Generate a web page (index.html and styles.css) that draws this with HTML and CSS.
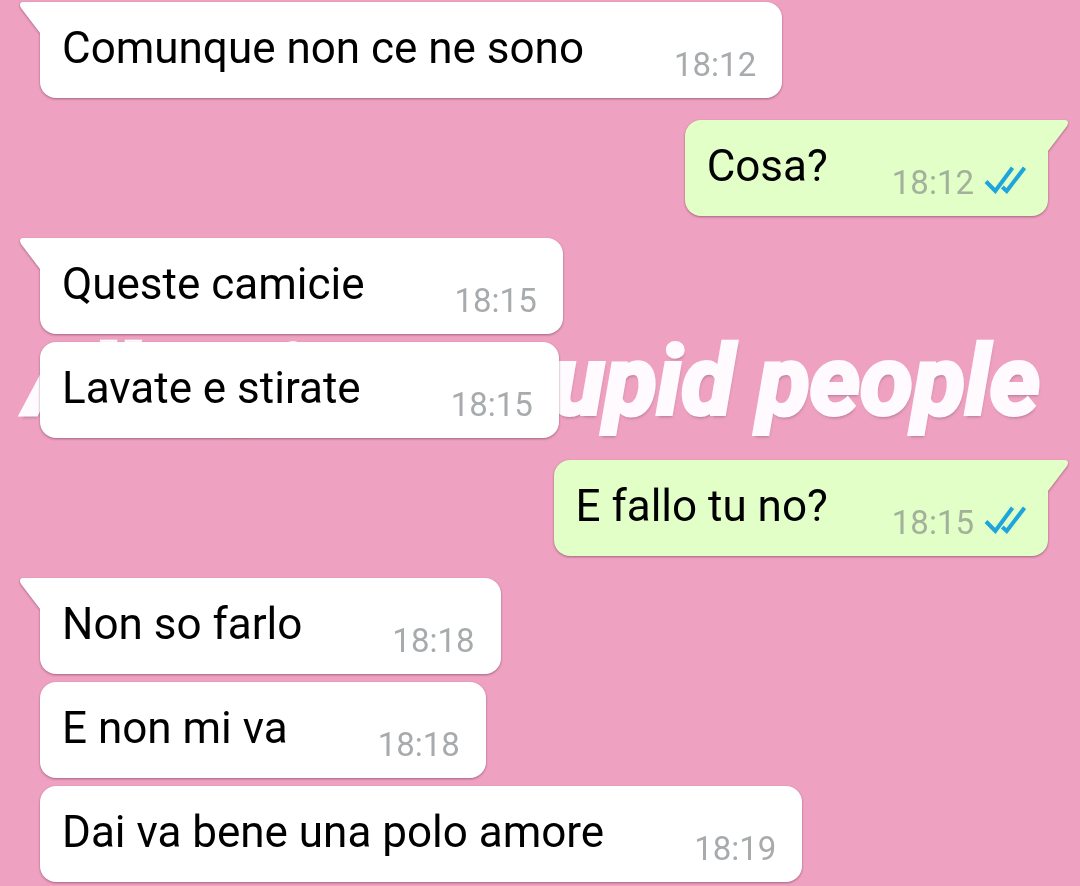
FILE: index.html
```
<!DOCTYPE html>
<html lang="it">
<head>
  <meta charset="UTF-8">
  <meta name="viewport" content="width=device-width, initial-scale=1">
  <title>Chat</title>
  <link rel="stylesheet" href="styles.css">
</head>
<body>
  <svg class="defs" width="0" height="0" aria-hidden="true">
    <symbol id="tail" viewBox="0 0 21 32">
      <path d="M21 0H3Q0 0 0 3Q0 4 1 6L20 31H21Z" fill="currentColor"/>
    </symbol>
    <symbol id="read" viewBox="0 0 42 28">
      <path d="M2 15.500L11.300 25L28.500 1.800M18.300 21L22.700 25L40.500 1.800" fill="none" stroke="currentColor" stroke-width="4"/>
    </symbol>
  </svg>
  <div class="wallpaper">
    <span>Allergic to</span>
    <span>stupid people</span>
  </div>
  <main class="chat">
    <div class="message in first">
      <svg class="tail"><use href="#tail"/></svg>
      <span class="text">Comunque non ce ne sono</span>
      <time class="time">18:12</time>
    </div>
    <div class="message out first">
      <svg class="tail"><use href="#tail"/></svg>
      <span class="text">Cosa?</span>
      <time class="time">18:12</time>
      <svg class="read" role="img" aria-label="Letto"><use href="#read"/></svg>
    </div>
    <div class="message in first">
      <svg class="tail"><use href="#tail"/></svg>
      <span class="text">Queste camicie</span>
      <time class="time">18:15</time>
    </div>
    <div class="message in">
      <span class="text">Lavate e stirate</span>
      <time class="time">18:15</time>
    </div>
    <div class="message out first">
      <svg class="tail"><use href="#tail"/></svg>
      <span class="text">E fallo tu no?</span>
      <time class="time">18:15</time>
      <svg class="read" role="img" aria-label="Letto"><use href="#read"/></svg>
    </div>
    <div class="message in first">
      <svg class="tail"><use href="#tail"/></svg>
      <span class="text">Non so farlo</span>
      <time class="time">18:18</time>
    </div>
    <div class="message in">
      <span class="text">E non mi va</span>
      <time class="time">18:18</time>
    </div>
    <div class="message in">
      <span class="text">Dai va bene una polo amore</span>
      <time class="time">18:19</time>
    </div>
  </main>
</body>
</html>
```
FILE: styles.css
```
* {
  box-sizing: border-box;
}
body {
  position: relative;
  margin: 0;
  background: #eea1c0;
  font-family: Roboto, sans-serif;
}
.defs {
  position: absolute;
}
/* slogan printed on the chat background */
.wallpaper {
  position: absolute;
  top: 325px;
  left: 0;
  right: 0;
  display: flex;
  justify-content: space-between;
  padding: 0 40px 0 26px;
  font-size: 96px;
  font-weight: bold;
  font-style: italic;
  line-height: 112px;
  white-space: nowrap;
  color: #fffafd;
  -webkit-text-stroke: 4px #fffafd;
  text-shadow: 1px 3px 3px #b07a96;
}
.chat {
  position: relative;
  display: flex;
  flex-direction: column;
  padding: 2px 32px 3px 40px;
}
.message {
  position: relative;
  display: flex;
  align-items: flex-start;
  margin-top: 8px;
  padding: 18px 26px 22px 22px;
  border-radius: 16px;
  filter: drop-shadow(0 1px 1px rgba(90, 40, 65, 0.5));
}
.first {
  margin-top: 22px;
}
.message:first-child {
  margin-top: 0;
}
.in {
  align-self: flex-start;
  color: #ffffff;
  background: #ffffff;
}
.in.first {
  border-top-left-radius: 0;
}
.out {
  align-self: flex-end;
  padding-right: 22px;
  color: #e1ffc7;
  background: #e1ffc7;
}
.out.first {
  border-top-right-radius: 0;
}
.tail {
  position: absolute;
  top: 0;
  left: -20px;
  width: 21px;
  height: 32px;
}
.out .tail {
  left: auto;
  right: -20px;
  transform: scaleX(-1);
}
.text {
  font-size: 44px;
  line-height: 56px;
  margin-right: 90px;
  color: #000000;
}
.out .text {
  margin-right: 64px;
}
.time {
  padding-top: 25px;
  font-size: 33px;
  line-height: 40px;
  margin-bottom: -9px;
  color: #a8abad;
}
.out .time {
  color: #a3b19b;
}
.read {
  width: 42px;
  height: 28px;
  margin-top: 28px;
  margin-left: 10px;
  color: #1ea5dc;
}
```
